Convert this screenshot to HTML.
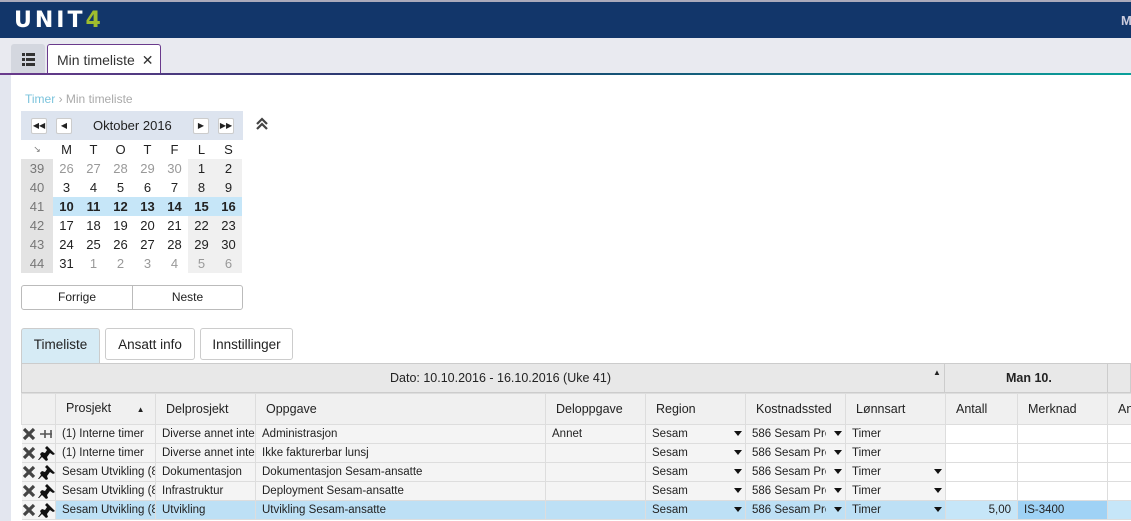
<!DOCTYPE html>
<html><head><meta charset="utf-8"><style>
*{box-sizing:border-box;margin:0;padding:0}
body{width:1131px;height:521px;overflow:hidden;font-family:"Liberation Sans",sans-serif;background:#fff;position:relative;font-size:12px;color:#222}
.a{position:absolute}
#top{left:0;top:0;width:1131px;height:38px;background:#12366a;border-top:2px solid #aab}
#bar{left:0;top:38px;width:1131px;height:37px;background:#e9eaf0}
#line{left:0;top:73px;width:1131px;height:2px;background:linear-gradient(90deg,#6a3a8c,#1a3a6a 40%,#0aa09a)}
#side{left:0;top:75px;width:11px;height:446px;background:#e3e6ef}
table{border-collapse:collapse;table-layout:fixed}
.cal td{height:19px;text-align:center;font-size:13px;width:27px}
.cal td.w{width:32px;background:#e3e3e3;color:#777}
.cal td.we{background:#f0f0f0}
.cal .g{color:#999}
.cal tr.h td{background:#c6e6f8;font-weight:bold;font-size:13px}
.cal tr.h td.w{background:#e3e3e3;font-weight:normal}
.nb{position:absolute;top:7px;width:16px;height:16px;background:#fff;border:1px solid #ccc;border-radius:2px;font-size:8px;text-align:center;line-height:14px}
.grid td{border:1px solid #ddd;height:19px;padding:0 6px;white-space:nowrap;overflow:hidden;font-size:11.5px;line-height:17px;background:#f4f4f4;position:relative}
.grid tr{height:19px}
.grid tr.s td{background:#bde0f5}
.grid td.wt{background:#fff}
.grid tr.s td.wt{background:#c6e6f8}
.grid tr.s td.mk{background:#9fd2f5}
.grid td.dd span{display:block;width:74px;overflow:hidden}
.grid td.dd::after{content:"";position:absolute;right:3px;top:6px;border:4px solid transparent;border-top:5px solid #111}
.grid td.ic{padding:0;border-left:none}
.grid td.ic svg{display:block}
.h2 td{background:#f0f0f0!important;height:31px!important;font-size:12.5px!important;padding-left:10px!important}
.grid tr.h2{height:31px}
.btn{position:absolute;top:328px;height:33px;border:1px solid #ccc;border-radius:3px 3px 0 0;background:#fff;font-size:13.5px;text-align:center;line-height:31px}
</style></head><body>
<div id="top" class="a"><div class="a" style="left:14px;top:6px;font-size:22px;letter-spacing:3px;color:#fff;font-weight:bold;font-family:'DejaVu Sans',sans-serif">UNIT<span style="color:#9fbd2e">4</span></div><div class="a" style="left:1121px;top:11px;color:#ccd;font-weight:bold;font-size:13px">M</div></div>
<div id="bar" class="a"></div>
<div class="a" style="left:11px;top:44px;width:34px;height:30px;background:#d4d7df;border-radius:3px 3px 0 0"><svg width="34" height="30"><g fill="#333"><rect x="11" y="9" width="3" height="3"/><rect x="15" y="9" width="9" height="3"/><rect x="11" y="14" width="3" height="3"/><rect x="15" y="14" width="9" height="3"/><rect x="11" y="19" width="3" height="3"/><rect x="15" y="19" width="9" height="3"/></g></svg></div>
<div class="a" style="left:47px;top:44px;width:114px;height:31px;background:#fff;border:1px solid #6a3a8c;border-bottom:none;border-radius:3px 3px 0 0;font-size:14px;padding:7px 0 0 9px;color:#333">Min timeliste <span style="font-size:14px;margin-left:3px">✕</span></div>
<div id="line" class="a"></div>
<div id="side" class="a"></div>
<div class="a" style="left:25px;top:92px;font-size:12px;color:#7bc3dc">Timer <span style="color:#aaa">&#x203A; Min timeliste</span></div>
<div class="a" style="left:21px;top:111px;width:222px;height:29px;background:#dde4ef">
<div class="nb" style="left:10px">◀◀</div><div class="nb" style="left:35px">◀</div>
<div class="a" style="left:72px;top:7px;font-size:13px">Oktober 2016</div>
<div class="nb" style="left:172px">▶</div><div class="nb" style="left:197px">▶▶</div></div>
<svg class="a" style="left:255px;top:117px" width="14" height="14"><path d="M2 7 L7 2 L12 7 M2 12 L7 7 L12 12" stroke="#444" stroke-width="2.2" fill="none"/></svg>
<table class="cal a" style="left:21px;top:140px;width:221px">
<tr><td class="w" style="background:#fff;font-size:9px">↘</td><td>M</td><td>T</td><td>O</td><td>T</td><td>F</td><td>L</td><td>S</td></tr>
<tr><td class="w">39</td><td class="g">26</td><td class="g">27</td><td class="g">28</td><td class="g">29</td><td class="g">30</td><td class="we">1</td><td class="we">2</td></tr>
<tr><td class="w">40</td><td>3</td><td>4</td><td>5</td><td>6</td><td>7</td><td class="we">8</td><td class="we">9</td></tr>
<tr class="h"><td class="w">41</td><td>10</td><td>11</td><td>12</td><td>13</td><td>14</td><td>15</td><td>16</td></tr>
<tr><td class="w">42</td><td>17</td><td>18</td><td>19</td><td>20</td><td>21</td><td class="we">22</td><td class="we">23</td></tr>
<tr><td class="w">43</td><td>24</td><td>25</td><td>26</td><td>27</td><td>28</td><td class="we">29</td><td class="we">30</td></tr>
<tr><td class="w">44</td><td>31</td><td class="g">1</td><td class="g">2</td><td class="g">3</td><td class="g">4</td><td class="we g">5</td><td class="we g">6</td></tr>
</table>
<div class="a" style="left:21px;top:285px;width:222px;height:25px;border:1px solid #bbb;border-radius:3px;font-size:12px;display:flex"><div style="width:111px;text-align:center;line-height:23px;border-right:1px solid #bbb">Forrige</div><div style="flex:1;text-align:center;line-height:23px">Neste</div></div>
<div class="btn" style="left:21px;width:79px;background:#d6ebf5;height:36px">Timeliste</div>
<div class="btn" style="left:105px;width:90px;border-radius:3px;height:32px">Ansatt info</div>
<div class="btn" style="left:200px;width:93px;border-radius:3px;height:32px">Innstillinger</div>
<div class="a" style="left:21px;top:363px;width:1110px;height:30px;background:#e8e8e8;border:1px solid #ccc"></div>
<div class="a" style="left:390px;top:371px;font-size:12.5px">Dato: 10.10.2016 - 16.10.2016 (Uke 41)</div>
<div class="a" style="left:933px;top:368px;font-size:8px">▲</div>
<div class="a" style="left:944px;top:363px;width:1px;height:30px;background:#ccc"></div>
<div class="a" style="left:1006px;top:371px;font-weight:bold;font-size:12.5px">Man 10.</div>
<div class="a" style="left:1107px;top:363px;width:1px;height:30px;background:#ccc"></div>
<svg width="0" height="0" style="position:absolute"><defs>
<g id="x"><path d="M2 3 L12 13 M12 3 L2 13" stroke="#444" stroke-width="3.2"/></g>
<g id="p"><path d="M9 2 L17 10 L15 11 L12 9 L9 13 L10 16 L8 17 L4 13 L1 16 L0 16 L3 12 L2 10 L4 8 L7 9 L9 6 L7 4 Z" fill="#111"/></g>
</defs></svg>
<table class="grid a" style="left:21px;top:393px;width:1130px">
<colgroup><col style="width:34px"><col style="width:100px"><col style="width:100px"><col style="width:290px"><col style="width:100px"><col style="width:100px"><col style="width:100px"><col style="width:100px"><col style="width:72px"><col style="width:90px"><col style="width:44px"></colgroup>
<tr class="h2"><td></td><td>Prosjekt <span style="font-size:8px;margin-left:22px">▲</span></td><td>Delprosjekt</td><td>Oppgave</td><td>Deloppgave</td><td>Region</td><td>Kostnadssted</td><td>Lønnsart</td><td>Antall</td><td>Merknad</td><td>Antall</td></tr>
<tr><td class="ic"><svg width="34" height="17"><use href="#x" x="0" y="0"/><path d="M18 8 H30 M23 4 V12 M29 4 V12" stroke="#555" stroke-width="1.6"/></svg></td><td>(1) Interne timer</td><td>Diverse annet interne</td><td>Administrasjon</td><td>Annet</td><td class="dd"><span>Sesam</span></td><td class="dd"><span>586 Sesam Prosjekt</span></td><td>Timer</td><td class="wt"></td><td class="wt"></td><td class="wt"></td></tr>
<tr><td class="ic"><svg width="34" height="17"><use href="#x" x="0" y="0"/><use href="#p" x="16" y="-1"/></svg></td><td>(1) Interne timer</td><td>Diverse annet interne</td><td>Ikke fakturerbar lunsj</td><td></td><td class="dd"><span>Sesam</span></td><td class="dd"><span>586 Sesam Prosjekt</span></td><td>Timer</td><td class="wt"></td><td class="wt"></td><td class="wt"></td></tr>
<tr><td class="ic"><svg width="34" height="17"><use href="#x" x="0" y="0"/><use href="#p" x="16" y="-1"/></svg></td><td>Sesam Utvikling (8)</td><td>Dokumentasjon</td><td>Dokumentasjon Sesam-ansatte</td><td></td><td class="dd"><span>Sesam</span></td><td class="dd"><span>586 Sesam Prosjekt</span></td><td class="dd"><span>Timer</span></td><td class="wt"></td><td class="wt"></td><td class="wt"></td></tr>
<tr><td class="ic"><svg width="34" height="17"><use href="#x" x="0" y="0"/><use href="#p" x="16" y="-1"/></svg></td><td>Sesam Utvikling (8)</td><td>Infrastruktur</td><td>Deployment Sesam-ansatte</td><td></td><td class="dd"><span>Sesam</span></td><td class="dd"><span>586 Sesam Prosjekt</span></td><td class="dd"><span>Timer</span></td><td class="wt"></td><td class="wt"></td><td class="wt"></td></tr>
<tr class="s"><td class="ic" style="background:#f4f4f4"><svg width="34" height="17"><use href="#x" x="0" y="0"/><use href="#p" x="16" y="-1"/></svg></td><td>Sesam Utvikling (8)</td><td>Utvikling</td><td>Utvikling Sesam-ansatte</td><td></td><td class="dd"><span>Sesam</span></td><td class="dd"><span>586 Sesam Prosjekt</span></td><td class="dd"><span>Timer</span></td><td class="wt" style="text-align:right">5,00</td><td class="mk">IS-3400</td><td class="wt"></td></tr>
</table>
</body></html>
